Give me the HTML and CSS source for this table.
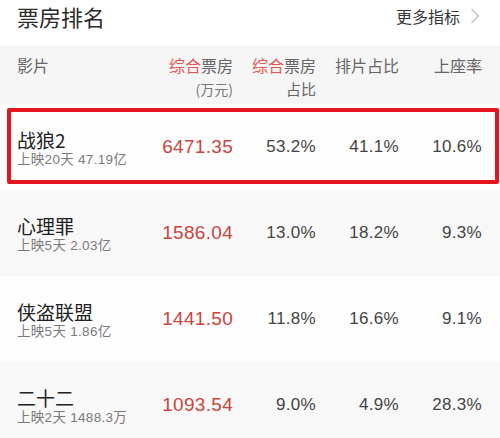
FILE: index.html
```html
<!DOCTYPE html>
<html lang="zh">
<head>
<meta charset="utf-8">
<link rel="stylesheet" href="styles.css">
</head>
<body>
<div class="page">
  <div class="topbar">
    <div class="title">票房排名</div>
    <div class="more">更多指标
      <svg class="chev" width="10" height="16" viewBox="0 0 10 16"><path d="M1.5 1 L8.5 8 L1.5 15" fill="none" stroke="#c4c4c4" stroke-width="1.4"/></svg>
    </div>
  </div>
  <div class="row head">
    <div class="c name">影片</div>
    <div class="c"><span class="hl">综合</span>票房<br><span class="unit">(万元)</span></div>
    <div class="c"><span class="hl">综合</span>票房<br><span class="l2">占比</span></div>
    <div class="c">排片占比</div>
    <div class="c">上座率</div>
  </div>
  <div class="row item marked">
    <div class="c name"><div class="mv">战狼2</div><div class="sub">上映20天 47.19亿</div></div>
    <div class="c num red">6471.35</div>
    <div class="c num">53.2%</div>
    <div class="c num">41.1%</div>
    <div class="c num">10.6%</div>
  </div>
  <div class="row item alt">
    <div class="c name"><div class="mv">心理罪</div><div class="sub">上映5天 2.03亿</div></div>
    <div class="c num red">1586.04</div>
    <div class="c num">13.0%</div>
    <div class="c num">18.2%</div>
    <div class="c num">9.3%</div>
  </div>
  <div class="row item">
    <div class="c name"><div class="mv">侠盗联盟</div><div class="sub">上映5天 1.86亿</div></div>
    <div class="c num red">1441.50</div>
    <div class="c num">11.8%</div>
    <div class="c num">16.6%</div>
    <div class="c num">9.1%</div>
  </div>
  <div class="row item alt">
    <div class="c name"><div class="mv">二十二</div><div class="sub">上映2天 1488.3万</div></div>
    <div class="c num red">1093.54</div>
    <div class="c num">9.0%</div>
    <div class="c num">4.9%</div>
    <div class="c num">28.3%</div>
  </div>
</div>
</body>
</html>
```

FILE: styles.css
```css
html, body {
  margin: 0;
  padding: 0;
  background: #ffffff;
}
body {
  font-family: "Liberation Sans", "Noto Sans CJK SC", sans-serif;
  color: #333;
  width: 500px;
  height: 438px;
  overflow: hidden;
}
.page {
  width: 500px;
}
.topbar {
  height: 46px;
  display: flex;
  align-items: center;
  justify-content: space-between;
  padding: 0 20px 0 17px;
  box-sizing: border-box;
  background: #fff;
}
.title {
  font-family: "Noto Sans CJK SC", sans-serif;
  font-size: 22px;
  color: #2b2b2b;
  line-height: 26px;
  margin-top: -14px;
}
.more {
  display: flex;
  align-items: center;
  gap: 10px;
  font-family: "Noto Sans CJK SC", sans-serif;
  font-size: 16px;
  color: #333;
  margin-top: -14px;
}
.chev {
  display: block;
}
.row {
  display: grid;
  grid-template-columns: 1fr 83px 83px 83px 83px;
  padding: 0 18px 0 17px;
  box-sizing: border-box;
}
.head {
  height: 58px;
  background: #f5f5f5;
  align-items: start;
  padding-top: 8px;
  font-family: "Noto Sans CJK SC", sans-serif;
  font-size: 16px;
  line-height: 22.5px;
  color: #666;
}
.head .c {
  text-align: right;
}
.head .c.name {
  text-align: left;
}
.hl {
  color: #e0554d;
}
.unit {
  font-size: 14px;
  color: #777;
}
.l2 {
  font-size: 15px;
}
.item {
  height: 86px;
  align-items: center;
  background: #fdfdfd;
  position: relative;
}
.item.alt {
  background: #f8f8f8;
}
.item .c {
  text-align: right;
}
.item .c.name {
  text-align: left;
  padding-top: 3px;
}
.mv {
  font-family: "Noto Sans CJK SC", sans-serif;
  font-size: 19px;
  line-height: 22px;
  color: #222;
}
.sub {
  font-size: 13.5px;
  line-height: 17px;
  color: #7a7a7a;
  letter-spacing: 0.3px;
}
.num {
  font-size: 17px;
  color: #444;
  letter-spacing: 0.3px;
}
.num.red {
  font-size: 19px;
  color: #c9453f;
}
.marked::after {
  content: "";
  position: absolute;
  left: 7px;
  right: 1px;
  top: 4px;
  bottom: 6px;
  border: 4px solid #e3161d;
  border-radius: 2px;
  pointer-events: none;
}
```
